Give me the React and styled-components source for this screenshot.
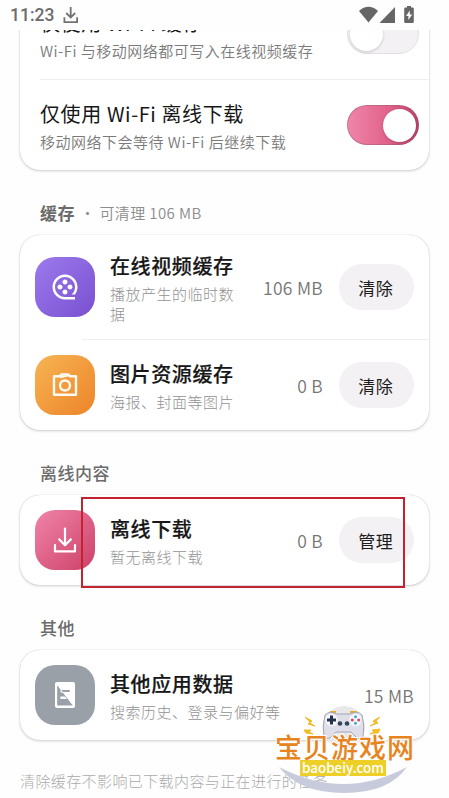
import React from 'react';
import styled, { createGlobalStyle, css } from 'styled-components';
import { RiMovie2Line } from 'react-icons/ri';

const CameraIcon = () => (
	<svg width="26" height="24" viewBox="0 0 26 24" fill="none" stroke="#fffaf0" strokeWidth="2.4" strokeLinejoin="round">
		<path d="M2 3.3H7.6L9.4 1.5H16.4L18.2 3.3H24V21.8H2Z" />
		<path d="M8 4.4L17 2.2" strokeWidth="2" />
		<circle cx="13" cy="12.5" r="5" />
	</svg>
);

const DownloadIcon = () => (
	<svg width="24" height="26" viewBox="0 0 24 26" fill="none" stroke="#fff" strokeWidth="2.2" strokeLinecap="round" strokeLinejoin="round">
		<path d="M12 1.6V18" />
		<path d="M6.2 12.4L12 18.2L17.8 12.4" />
		<path d="M2 18V24.4H22V18" />
	</svg>
);

const DataIcon = () => (
	<svg width="20" height="26" viewBox="0 0 20 26">
		<rect width="20" height="26" rx="2" fill="#fff" />
		<path d="M2.2 3.2V23.6H17.8Z" fill="#9aa0a8" />
		<path d="M6 8H14.5Q15.5 9 14.5 10H7.6Z" fill="#9aa0a8" />
		<path d="M5.6 7.6L8.4 10.6H5.6ZM5.4 14.6H9.8L12 17H5.4Z" fill="#fff" />
	</svg>
);

const StatusBar = () => (
	<Status>
		<Time>11:23</Time>
		<svg width="16" height="17" viewBox="0 0 16 17" fill="none" stroke="#737373" strokeWidth="1.8">
			<path d="M7.7 0V10M3.2 6L7.7 10.4L12.2 6M1.4 10.2V15.1H14.1V10.2" />
		</svg>
		<Signals>
			<svg width="56" height="18" viewBox="0 0 56 18" fill="#666">
				<path d="M0 5Q9.5 -3.4 19 5L9.5 16.4Z" />
				<path d="M36 1V17H20.5Z" />
				<path d="M48 0H52V1.4H53.6Q54.8 1.4 54.8 2.6V15.8Q54.8 17 53.6 17H46.4Q45.2 17 45.2 15.8V2.6Q45.2 1.4 46.4 1.4H48Z" />
				<path d="M50.8 4.4L47 10H49.4V14L53.2 8.4H50.8Z" fill="#fff" />
			</svg>
		</Signals>
	</Status>
);

const Setting = ({ title, desc, on }) => (
	<Row $setting>
		<Info>
			<Title>{title}</Title>
			<Desc $dark>{desc}</Desc>
		</Info>
		<Switch $on={on}>
			<Knob />
		</Switch>
	</Row>
);

const StorageItem = ({ icon, color, title, desc, size, action }) => (
	<Row>
		<IconBox $color={color}>{icon}</IconBox>
		<Info>
			<Title $bold>{title}</Title>
			<Desc>{desc}</Desc>
		</Info>
		<Size>{size}</Size>
		{action && <Button>{action}</Button>}
	</Row>
);

const Watermark = () => (
	<Mark>
		<svg width="142" height="90" viewBox="0 0 142 90">
			<path d="M6 61Q71 95 134 61Q116 87 71 87Q26 87 6 61Z" fill="#c8cbdc" />
			<circle cx="71" cy="21" r="21" fill="#e8e8ea" />
			<path d="M32 11L39 15L37 17L42 20L35 18L37 16ZM31 24L38 24L36 26L40 28L33 27ZM107 11L100 15L102 17L97 20L105 17L103 15ZM107 23L99 24L101 26L97 28L105 27Z" fill="#f3bc22" stroke="#f3bc22" />
			<path d="M57 6H63M77 6H84" stroke="#e8ad28" strokeWidth="2" />
			<path d="M52 9Q57 4 63 8H78Q84 4 89 9Q92 20 90 31Q86 35 81 29L78 26H63L60 29Q55 35 51 31Q49 20 52 9Z" fill="#dedfe9" stroke="#a4a6b8" />
			<circle cx="58.5" cy="14" r="6.2" fill="#f6f7fc" />
			<circle cx="82.5" cy="14" r="6.2" fill="#f6f7fc" />
			<path d="M58.5 9.5V18.5M54 14H63" stroke="#26334a" strokeWidth="3" />
			<circle cx="67" cy="17.5" r="2.3" fill="#34455b" />
			<circle cx="74" cy="17.5" r="2.3" fill="#34455b" />
			<circle cx="82.5" cy="10.8" r="1.5" fill="#40a8d0" />
			<circle cx="79.3" cy="14" r="1.5" fill="#d6455c" />
			<circle cx="85.7" cy="14" r="1.5" fill="#d6455c" />
			<circle cx="82.5" cy="17.2" r="1.5" fill="#40a8d0" />
		</svg>
		<MarkName>宝贝游戏网</MarkName>
		<MarkSite>baobeiy.com</MarkSite>
	</Mark>
);

const App = () => {
	return (
		<Page>
			<GlobalStyle />
			<StatusBar />
			<Content>
				<Card $first>
					<Setting title="仅使用 Wi-Fi 缓存" desc="Wi-Fi 与移动网络都可写入在线视频缓存" />
					<Divider $left={20} />
					<Setting title="仅使用 Wi-Fi 离线下载" desc="移动网络下会等待 Wi-Fi 后继续下载" on />
				</Card>

				<Label>
					<b>缓存</b>
					<Note>
						<Dot>・</Dot>可清理 106 MB
					</Note>
				</Label>
				<Card>
					<StorageItem
						icon={<RiMovie2Line size={30} color="#fff" />}
						color="linear-gradient(135deg, #9c7aed, #7950d0)"
						title="在线视频缓存"
						desc="播放产生的临时数据"
						size="106 MB"
						action="清除"
					/>
					<Divider $left={62} />
					<StorageItem
						icon={<CameraIcon />}
						color="linear-gradient(135deg, #f7b453, #ec8429)"
						title="图片资源缓存"
						desc="海报、封面等图片"
						size="0 B"
						action="清除"
					/>
				</Card>

				<Label>离线内容</Label>
				<Card>
					<StorageItem
						icon={<DownloadIcon />}
						color="linear-gradient(135deg, #f084a9, #cd4068)"
						title="离线下载"
						desc="暂无离线下载"
						size="0 B"
						action="管理"
					/>
					<Highlight />
				</Card>

				<Label>其他</Label>
				<Card>
					<StorageItem icon={<DataIcon />} color="#9aa0a8" title="其他应用数据" desc="搜索历史、登录与偏好等" size="15 MB" />
				</Card>
				<Footer>清除缓存不影响已下载内容与正在进行的任务。</Footer>
			</Content>
			<Watermark />
		</Page>
	);
};

export default App;

const GlobalStyle = createGlobalStyle`
	* {
		box-sizing: border-box;
	}

	body {
		margin: 0;
		background: #fefefe;
		font-family: 'Noto Sans CJK SC', sans-serif;
	}
`;

const Page = styled.div`
	position: relative;
	width: 449px;
	height: 798px;
	overflow: hidden;
	background: #fefefe;
`;

const Status = styled.div`
	height: 30px;
	display: flex;
	align-items: center;
	padding: 0 34px 0 10px;
	gap: 9px;
`;

const Time = styled.span`
	font: 500 17.5px/30px Roboto, sans-serif;
	color: #6c6c6c;
`;

const Signals = styled.div`
	display: flex;
	margin-left: auto;
`;

const Content = styled.div`
	height: 768px;
	padding: 0 20px;
	overflow: hidden;
`;

const Card = styled.div`
	position: relative;
	margin-top: ${({ $first }) => ($first ? '-41px' : '0')};
	border-radius: 20px;
	background: #fff;
	box-shadow: 0 0 1px rgba(0, 0, 0, 0.22), 0 1px 3px rgba(0, 0, 0, 0.18);
	width: 409px;
`;

const Row = styled.div`
	min-height: 90px;
	display: flex;
	align-items: center;
	padding: 15px;

	${({ $setting }) =>
		$setting &&
		css`
			padding: 0 10px 0 20px;
		`}
`;

const Divider = styled.div`
	height: 1px;
	margin-left: ${({ $left }) => $left}px;
	background: #efefef;
`;

const Info = styled.div`
	flex: 1;
	min-width: 0;
`;

const Title = styled.div`
	font-size: 20px;
	line-height: 31px;
	letter-spacing: 0.6px;
	font-weight: ${({ $bold }) => ($bold ? 500 : 400)};
	-webkit-text-stroke: ${({ $bold }) => ($bold ? '0.2px #171717' : '0')};
	color: #171717;
`;

const Desc = styled.div`
	margin-top: 3px;
	font-size: 15px;
	line-height: 20px;
	letter-spacing: 0.5px;
	font-weight: ${({ $dark }) => ($dark ? 350 : 300)};
	color: ${({ $dark }) => ($dark ? '#7a7a7a' : '#929292')};
`;

const Switch = styled.div`
	width: 72px;
	height: 40px;
	padding: 2px;
	display: flex;
	align-items: center;
	justify-content: ${({ $on }) => ($on ? 'flex-end' : 'flex-start')};
	border-radius: 20px;
	border: 1px solid ${({ $on }) => ($on ? 'rgba(140, 90, 110, 0.4)' : '#e2e0e2')};
	background: ${({ $on }) => ($on ? 'linear-gradient(90deg, #f086aa, #e06088 60%, #bd4068) border-box' : '#f3f1f3')};
`;

const Knob = styled.div`
	width: 33px;
	height: 33px;
	border-radius: 50%;
	background: #fff;
	box-shadow: 0 1px 3px rgba(0, 0, 0, 0.18);
`;

const Label = styled.div`
	height: 65px;
	display: flex;
	align-items: center;
	padding: 21px 20px 0;
	font-size: 17px;
	line-height: 44px;
	letter-spacing: 0.5px;
	font-weight: 500;
	color: #6b6b6b;
`;

const Note = styled.span`
	margin-left: 5px;
	font-size: 15px;
	letter-spacing: 0.4px;
	font-weight: 350;
	color: #8c8c8c;
`;

const Dot = styled.span`
	margin-right: 4px;
`;

const IconBox = styled.div`
	flex: none;
	display: flex;
	align-items: center;
	justify-content: center;
	width: 60px;
	height: 60px;
	margin-right: 15px;
	border-radius: 20px;
	background: ${({ $color }) => $color};
`;

const Size = styled.span`
	margin-left: 20px;
	font-size: 17.5px;
	letter-spacing: 0.3px;
	font-weight: 350;
	color: #757575;
	white-space: nowrap;
`;

const Button = styled.button`
	flex: none;
	width: 75.5px;
	height: 46px;
	margin-left: 15.5px;
	padding: 0 1px 0 0;
	border: 0;
	border-radius: 23px;
	background: #f3f1f3;
	font: 400 17px 'Noto Sans CJK SC', sans-serif;
	letter-spacing: 0.4px;
	color: #1d1d1d;
`;

const Highlight = styled.div`
	position: absolute;
	top: 2px;
	left: 61px;
	width: 324px;
	height: 91px;
	border: 2px solid #c3232e;
`;

const Footer = styled.div`
	margin-top: 30px;
	font-size: 15px;
	line-height: 22px;
	letter-spacing: 0.4px;
	font-weight: 300;
	color: #aaa;
	white-space: nowrap;
`;

const Mark = styled.div`
	position: absolute;
	left: 273px;
	top: 706px;
	width: 142px;
	height: 90px;

	svg {
		display: block;
	}
`;

const MarkName = styled.div`
	position: absolute;
	top: 23px;
	left: 2px;
	font-size: 27px;
	line-height: 36px;
	letter-spacing: 1px;
	font-weight: 500;
	white-space: nowrap;
	color: #e88420;
	-webkit-text-stroke: 2px #fff;
	paint-order: stroke fill;
`;

const MarkSite = styled.div`
	position: absolute;
	top: 54px;
	left: 27px;
	width: 86px;
	height: 16px;
	background: #edcf27;
	font: 500 13.4px/14px 'Noto Sans CJK SC', sans-serif;
	text-align: center;
	color: #fff;
`;
